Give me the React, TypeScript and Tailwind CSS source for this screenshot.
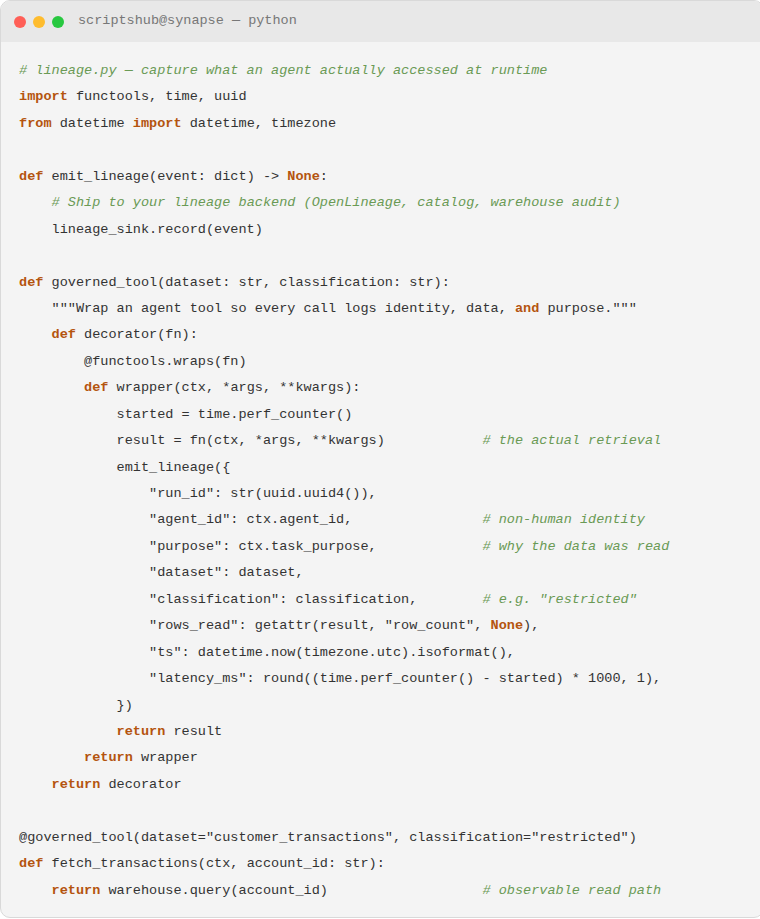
type Tok = [string, "k" | "c" | "t"];

const K = (s: string): Tok => [s, "k"];
const C = (s: string): Tok => [s, "c"];
const T = (s: string): Tok => [s, "t"];

const lines: Tok[][] = [
  [C("# lineage.py — capture what an agent actually accessed at runtime")],
  [K("import"), T(" functools, time, uuid")],
  [K("from"), T(" datetime "), K("import"), T(" datetime, timezone")],
  [],
  [K("def"), T(" emit_lineage(event: dict) -> "), K("None"), T(":")],
  [T("    "), C("# Ship to your lineage backend (OpenLineage, catalog, warehouse audit)")],
  [T("    lineage_sink.record(event)")],
  [],
  [K("def"), T(" governed_tool(dataset: str, classification: str):")],
  [T('    """Wrap an agent tool so every call logs identity, data, '), K("and"), T(' purpose."""')],
  [T("    "), K("def"), T(" decorator(fn):")],
  [T("        @functools.wraps(fn)")],
  [T("        "), K("def"), T(" wrapper(ctx, *args, **kwargs):")],
  [T("            started = time.perf_counter()")],
  [T("            result = fn(ctx, *args, **kwargs)            "), C("# the actual retrieval")],
  [T("            emit_lineage({")],
  [T('                "run_id": str(uuid.uuid4()),')],
  [T('                "agent_id": ctx.agent_id,                '), C("# non-human identity")],
  [T('                "purpose": ctx.task_purpose,             '), C("# why the data was read")],
  [T('                "dataset": dataset,')],
  [T('                "classification": classification,        '), C('# e.g. "restricted"')],
  [T('                "rows_read": getattr(result, "row_count", '), K("None"), T("),")],
  [T('                "ts": datetime.now(timezone.utc).isoformat(),')],
  [T('                "latency_ms": round((time.perf_counter() - started) * 1000, 1),')],
  [T("            })")],
  [T("            "), K("return"), T(" result")],
  [T("        "), K("return"), T(" wrapper")],
  [T("    "), K("return"), T(" decorator")],
  [],
  [T('@governed_tool(dataset="customer_transactions", classification="restricted")')],
  [K("def"), T(" fetch_transactions(ctx, account_id: str):")],
  [T("    "), K("return"), T(" warehouse.query(account_id)                   "), C("# observable read path")],
];

const cls = {
  k: "text-[#b4540f] font-bold",
  c: "text-[#6a9a55] italic",
  t: "text-[#333333]",
};

export default function App() {
  return (
    <div className="h-[919px] w-[760px] overflow-hidden bg-white">
      <div className="h-[918px] w-[764px] overflow-hidden rounded-[10px] border border-[#d9d9d9] bg-[#f4f4f4] font-['Liberation_Mono',monospace]">
        <div className="flex h-[41px] items-center gap-[7px] bg-[#e8e8e8] pl-[13px]">
          <span className="h-[12px] w-[12px] rounded-full bg-[#ff5f57]" />
          <span className="h-[12px] w-[12px] rounded-full bg-[#febc2e]" />
          <span className="h-[12px] w-[12px] rounded-full bg-[#28c840]" />
          <span className="ml-[7px] text-[13.5px] text-[#777777]">scriptshub@synapse — python</span>
        </div>
        <pre className="px-[18px] pt-[16px] text-[13.55px] leading-[26.45px] font-['Liberation_Mono',monospace]">
          {lines.map((ln, i) => (
            <div key={i} className="h-[26.45px] whitespace-pre">
              {ln.map(([s, k], j) => (
                <span key={j} className={cls[k]}>
                  {s}
                </span>
              ))}
            </div>
          ))}
        </pre>
      </div>
    </div>
  );
}
